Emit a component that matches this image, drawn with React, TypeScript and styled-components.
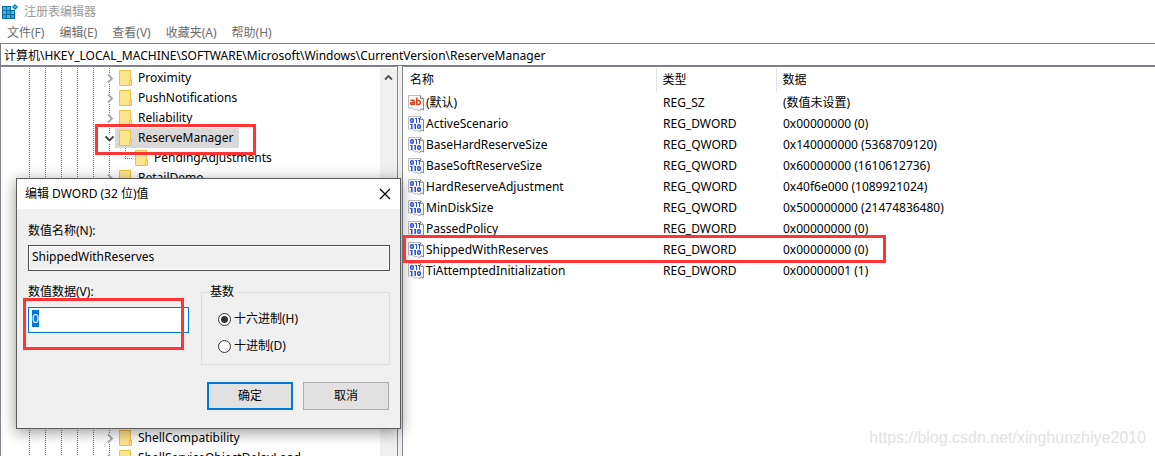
import React, { useEffect, useRef } from 'react';
import styled, { createGlobalStyle, css } from 'styled-components';

const Global = createGlobalStyle`
  * { box-sizing: border-box; }
  html, body, #root { height: 100%; }
  body {
    margin: 0;
    overflow: hidden;
    background: #fff;
    color: #000;
    font: 12px/20px "Noto Sans", "Noto Sans CJK SC", sans-serif;
  }
  button, input { font: inherit; color: inherit; }
`;

const Window = styled.main`
  position: relative;
  display: flex;
  flex-direction: column;
  height: 100%;
  min-height: 0;
`;

const TitleBar = styled.header`
  display: flex;
  align-items: center;
  gap: 5px;
  height: 24px;
  padding-left: 2px;
  color: #999;
`;

const Caption = styled.h1`
  margin: 0;
  font-size: 12px;
  font-weight: 400;
`;

const MenuBar = styled.nav`
  display: flex;
  gap: 15px;
  height: 18px;
  padding-left: 7px;
`;

const MenuItem = styled.button`
  padding: 0;
  border: 0;
  background: none;
  color: #6d6d6d;
  line-height: 18px;
`;

const AddressBar = styled.input`
  display: block;
  width: 100%;
  height: 23px;
  margin-top: 1px;
  padding: 0 3px;
  border: 1px solid #7a7d85;
  border-right: 0;
  border-radius: 0;
  background: #fff;
  outline: none;
  line-height: 20px;
`;

const Panes = styled.div`
  flex: 1;
  display: flex;
  gap: 4px;
  min-height: 0;
  background: #f0f0f0;
`;

const paneEdge = css`
  border: 1px solid #828790;
  border-bottom: 0;
  background: #fff;
  overflow: hidden;
`;

const TreePane = styled.section`
  ${paneEdge}
  display: flex;
  flex: 0 0 398px;
`;

const Tree = styled.ul`
  flex: 1;
  margin: 0;
  padding: 1px 0 0;
  list-style: none;
`;

const TreeRow = styled.li`
  display: flex;
  align-items: center;
  height: 20px;
  padding-left: 20px;
`;

const CoveredRows = styled.li<{ $rows: number }>`
  display: flex;
  height: ${(p) => p.$rows * 20}px;
  padding-left: 20px;
`;

const Guide = styled.span`
  flex: 0 0 16px;
  align-self: stretch;
  background: repeating-linear-gradient(#6e6e6e 0 1px, transparent 1px 2px) 8px 0 / 1px 100% no-repeat;
`;

const Elbow = styled(Guide)`
  background:
    repeating-linear-gradient(#6e6e6e 0 1px, transparent 1px 2px) 8px 0 / 1px 11px no-repeat,
    repeating-linear-gradient(90deg, #6e6e6e 0 1px, transparent 1px 2px) 8px 10px / 8px 1px no-repeat;
`;

const Expander = styled(Guide)`
  display: flex;
  align-items: center;
  justify-content: center;
`;

const Arrow = styled.svg`
  background: #fff;
`;

const KeyLabel = styled.span<{ $selected?: boolean }>`
  display: flex;
  align-items: center;
  gap: 6px;
  height: 20px;
  margin-left: -2px;
  padding: 0 6px 0 4px;
  white-space: nowrap;
  background: ${(p) => (p.$selected ? '#d9d9d9' : 'transparent')};
`;

const ScrollTrack = styled.div`
  flex: 0 0 17px;
  display: flex;
  justify-content: center;
  padding-top: 6px;
  margin-top: 1px;
  background: #f0f0f0;
`;

const ListPane = styled.section`
  ${paneEdge}
  flex: 1;
  min-width: 0;
  border-right: 0;
  padding-top: 1px;
`;

const ValueTable = styled.table`
  width: 100%;
  table-layout: fixed;
  border-collapse: collapse;
`;

const HeadCell = styled.th<{ $width?: number }>`
  width: ${(p) => (p.$width ? `${p.$width}px` : 'auto')};
  height: 24px;
  padding: 0 6px;
  border-left: 1px solid #e5e5e5;
  font-weight: 400;
  text-align: left;
  &:first-child { border-left: 0; padding-left: 7px; }
`;

const Cell = styled.td`
  height: 21px;
  padding: 0 7px;
  white-space: nowrap;
`;

const NameCell = styled.span`
  display: flex;
  align-items: center;
  gap: 2px;
  margin-left: -2px;
`;

const Dialog = styled.form`
  position: absolute;
  left: 16px;
  top: 178px;
  width: 385px;
  border: 1px solid #5c5c5c;
  background: #f0f0f0;
  box-shadow: 0 3px 14px rgba(0, 0, 0, 0.42);
`;

const DialogTitle = styled.div`
  display: flex;
  align-items: center;
  justify-content: space-between;
  height: 30px;
  padding: 0 9px 0 8px;
  background: #fff;
`;

const CloseButton = styled.button`
  display: flex;
  padding: 0;
  border: 0;
  background: none;
`;

const DialogBody = styled.div`
  padding: 12px 10px 18px 11px;
`;

const FieldLabel = styled.label`
  display: block;
  line-height: 20px;
`;

const TextInput = styled.input`
  display: block;
  width: 100%;
  height: 26px;
  padding: 0 3px 3px;
  border: 1px solid;
  border-radius: 0;
  outline: none;
`;

const NameInput = styled(TextInput)`
  margin-top: 4px;
  border-color: #4e4e4e;
  box-shadow: inset 0 0 0 1px #fff;
  background: #f0f0f0;
`;

const Columns = styled.div`
  display: flex;
  justify-content: space-between;
  margin-top: 11px;
`;

const DataField = styled.div`
  width: 161px;
`;

const DataInput = styled(TextInput)`
  margin-top: 5px;
  border-color: #0078d7;
  background: #fff;
  &::selection { background: #0078d7; color: #fff; }
`;

const BaseGroup = styled.fieldset`
  width: 189px;
  height: 83px;
  margin: 0;
  padding: 7px 16px;
  border: 1px solid #dcdcdc;
`;

const Legend = styled.legend`
  margin-left: -10px;
  padding: 0 2px;
  line-height: 20px;
`;

const Option = styled.label`
  display: flex;
  align-items: center;
  gap: 3px;
  height: 20px;
  & + & { margin-top: 7px; }
`;

const Radio = styled.input`
  appearance: none;
  width: 13px;
  height: 13px;
  margin: 0;
  border: 1px solid #333;
  border-radius: 50%;
  background: #fff;
  &:checked { background: radial-gradient(circle, #333 0 3px, #fff 4px); }
`;

const Actions = styled.div`
  display: flex;
  justify-content: flex-end;
  gap: 10px;
  margin-top: 17px;
  padding-right: 1px;
`;

const PushButton = styled.button<{ $primary?: boolean }>`
  width: 86px;
  height: 28px;
  padding: 0;
  border: ${(p) => (p.$primary ? '2px solid #0078d7' : '1px solid #adadad')};
  background: #e1e1e1;
`;

const Highlight = styled.div<{ $x: number; $y: number; $w: number; $h: number }>`
  position: absolute;
  left: ${(p) => p.$x}px;
  top: ${(p) => p.$y}px;
  width: ${(p) => p.$w}px;
  height: ${(p) => p.$h}px;
  border: 3px solid #ff3535;
  pointer-events: none;
`;

const Watermark = styled.div`
  position: absolute;
  right: 9px;
  bottom: 8px;
  color: #e2e2e2;
  font: 16px/20px "Liberation Sans", Arial, sans-serif;
`;

const RegeditIcon = () => (
  <svg width="17" height="16" viewBox="0 0 17 16" aria-hidden="true">
    <path d="M0 2h9v4h4v9H0z" fill="#0b6c9f" />
    <path d="M1 3h3v3H1zM5 3h3v3H5zM1 7h3v3H1zM9 7h3v3H9zM5 11h3v3H5z" fill="#38bdf2" />
    <path d="M5 7h3v3H5zM1 11h3v3H1zM9 11h3v3H9z" fill="#1aa7e4" />
    <path d="M13 0l3 3-3 3-3-3z" fill="#0b78b0" />
    <path d="M13 1.500l1.500 1.500-1.500 1.500-1.500-1.500z" fill="#38bdf2" />
  </svg>
);

const FolderIcon = () => (
  <svg width="13" height="16" viewBox="0 0 13 16" aria-hidden="true">
    <path d="M.5.500h11v9h1v6H.5z" fill="#ffe48f" stroke="#e9c341" />
    <path d="M10.500 15V10.500h2" fill="none" stroke="#e9c341" />
  </svg>
);

const Page = ({ children }: { children: React.ReactNode }) => (
  <svg width="16" height="16" viewBox="0 0 16 16" aria-hidden="true">
    <path d="M.5.500h12l3 3v11.500l-2-1-2 1.500-3-1-2 .5-2-2h-4z" fill="#f8f8f8" stroke="#bdbdbd" />
    <path d="M12.500.500v3h3M15.500 4v11l-2-1-2 1.500" fill="none" stroke="#8c8c8c" />
    {children}
  </svg>
);

const StringIcon = () => (
  <Page>
    <g fill="none" stroke="#d9491f" strokeWidth="1.600">
      <path d="M2.500 5.300h2.700q1 0 1 1v3.700M6 7.500H3.500q-1 0-1 1t1 .9H6M8.800 2.500v7.500M8.800 5.500h1.700q1.800 0 1.800 2t-1.800 2H8.800" />
    </g>
  </Page>
);

const BinaryIcon = () => (
  <Page>
    <g fill="none" stroke="#2c50d8" strokeWidth="1.500">
      <rect x="2.750" y="2.750" width="2.500" height="3.500" rx="1" />
      <rect x="9.750" y="8.750" width="2.500" height="3.500" rx="1" />
    </g>
    <path
      d="M7 2h2v5H8V3H7zM10 2h2v5h-1V3h-1zM2 8h2.500v5H3V9H2zM6 8h2v5H6.500V9H6z"
      fill="#2c50d8"
    />
  </Page>
);

const Chevron = ({ open }: { open?: boolean }) => (
  <Arrow width="11" height="11" viewBox="0 0 11 11" aria-hidden="true">
    <path
      d={open ? 'M1.500 3.500l4 4 4-4' : 'M4 1.500l4 4-4 4'}
      fill="none"
      stroke={open ? '#404040' : '#a6a6a6'}
      strokeWidth="1.800"
    />
  </Arrow>
);

const Guides = () => (
  <>
    {[0, 1, 2, 3, 4].map((n) => (
      <Guide key={n} />
    ))}
  </>
);

type KeyProps = { name: string; open?: boolean; selected?: boolean };

const KeyRow = ({ name, open, selected }: KeyProps) => (
  <TreeRow>
    <Guides />
    <Expander>
      <Chevron open={open} />
    </Expander>
    <KeyLabel $selected={selected}>
      <FolderIcon />
      {name}
    </KeyLabel>
  </TreeRow>
);

const values = [
  ['(默认)', 'REG_SZ', '(数值未设置)'],
  ['ActiveScenario', 'REG_DWORD', '0x00000000 (0)'],
  ['BaseHardReserveSize', 'REG_QWORD', '0x140000000 (5368709120)'],
  ['BaseSoftReserveSize', 'REG_QWORD', '0x60000000 (1610612736)'],
  ['HardReserveAdjustment', 'REG_QWORD', '0x40f6e000 (1089921024)'],
  ['MinDiskSize', 'REG_QWORD', '0x500000000 (21474836480)'],
  ['PassedPolicy', 'REG_DWORD', '0x00000000 (0)'],
  ['ShippedWithReserves', 'REG_DWORD', '0x00000000 (0)'],
  ['TiAttemptedInitialization', 'REG_DWORD', '0x00000001 (1)'],
];

export default function App() {
  const dataRef = useRef<HTMLInputElement>(null);

  useEffect(() => {
    dataRef.current?.focus();
    dataRef.current?.select();
  }, []);

  return (
    <Window>
      <Global />
      <TitleBar>
        <RegeditIcon />
        <Caption>注册表编辑器</Caption>
      </TitleBar>
      <MenuBar>
        {['文件(F)', '编辑(E)', '查看(V)', '收藏夹(A)', '帮助(H)'].map((item) => (
          <MenuItem key={item} type="button">{item}</MenuItem>
        ))}
      </MenuBar>
      <AddressBar
        aria-label="地址"
        readOnly
        value={'计算机\\HKEY_LOCAL_MACHINE\\SOFTWARE\\Microsoft\\Windows\\CurrentVersion\\ReserveManager'}
      />
      <Panes>
        <TreePane>
          <Tree>
            <KeyRow name="Proximity" />
            <KeyRow name="PushNotifications" />
            <KeyRow name="Reliability" />
            <KeyRow name="ReserveManager" open selected />
            <TreeRow>
              <Guides />
              <Guide />
              <Elbow />
              <KeyLabel>
                <FolderIcon />
                PendingAdjustments
              </KeyLabel>
            </TreeRow>
            <KeyRow name="RetailDemo" />
            <CoveredRows $rows={12}>
              <Guides />
              <Guide />
            </CoveredRows>
            <KeyRow name="ShellCompatibility" />
            <KeyRow name="ShellServiceObjectDelayLoad" />
          </Tree>
          <ScrollTrack>
            <svg width="9" height="8" viewBox="0 0 9 8" aria-hidden="true">
              <path d="M1 5.500l3.500-3.500 3.500 3.500" fill="none" stroke="#505050" strokeWidth="1.800" />
            </svg>
          </ScrollTrack>
        </TreePane>
        <ListPane>
          <ValueTable>
            <thead>
              <tr>
                <HeadCell $width={253}>名称</HeadCell>
                <HeadCell $width={120}>类型</HeadCell>
                <HeadCell>数据</HeadCell>
              </tr>
            </thead>
            <tbody>
              {values.map(([name, type, data]) => (
                <tr key={name}>
                  <Cell>
                    <NameCell>
                      {type === 'REG_SZ' ? <StringIcon /> : <BinaryIcon />}
                      {name}
                    </NameCell>
                  </Cell>
                  <Cell>{type}</Cell>
                  <Cell>{data}</Cell>
                </tr>
              ))}
            </tbody>
          </ValueTable>
        </ListPane>
      </Panes>

      <Dialog role="dialog" aria-labelledby="dialog-title" onSubmit={(e) => e.preventDefault()}>
        <DialogTitle>
          <span id="dialog-title">编辑 DWORD (32 位)值</span>
          <CloseButton type="button" aria-label="关闭">
            <svg width="12" height="12" viewBox="0 0 12 12" aria-hidden="true">
              <path d="M1 1l10 10M11 1L1 11" stroke="#000" strokeWidth="1.200" />
            </svg>
          </CloseButton>
        </DialogTitle>
        <DialogBody>
          <FieldLabel htmlFor="value-name">数值名称(N):</FieldLabel>
          <NameInput id="value-name" readOnly value="ShippedWithReserves" />
          <Columns>
            <DataField>
              <FieldLabel htmlFor="value-data">数值数据(V):</FieldLabel>
              <DataInput id="value-data" ref={dataRef} defaultValue="0" />
            </DataField>
            <BaseGroup>
              <Legend>基数</Legend>
              <Option>
                <Radio type="radio" name="base" defaultChecked />
                十六进制(H)
              </Option>
              <Option>
                <Radio type="radio" name="base" />
                十进制(D)
              </Option>
            </BaseGroup>
          </Columns>
          <Actions>
            <PushButton $primary type="submit">确定</PushButton>
            <PushButton type="button">取消</PushButton>
          </Actions>
        </DialogBody>
      </Dialog>

      <Highlight $x={95} $y={124} $w={161} $h={31} />
      <Highlight $x={403} $y={235} $w={483} $h={28} />
      <Highlight $x={23} $y={298} $w={161} $h={52} />
      <Watermark>https://blog.csdn.net/xinghunzhiye2010</Watermark>
    </Window>
  );
}
